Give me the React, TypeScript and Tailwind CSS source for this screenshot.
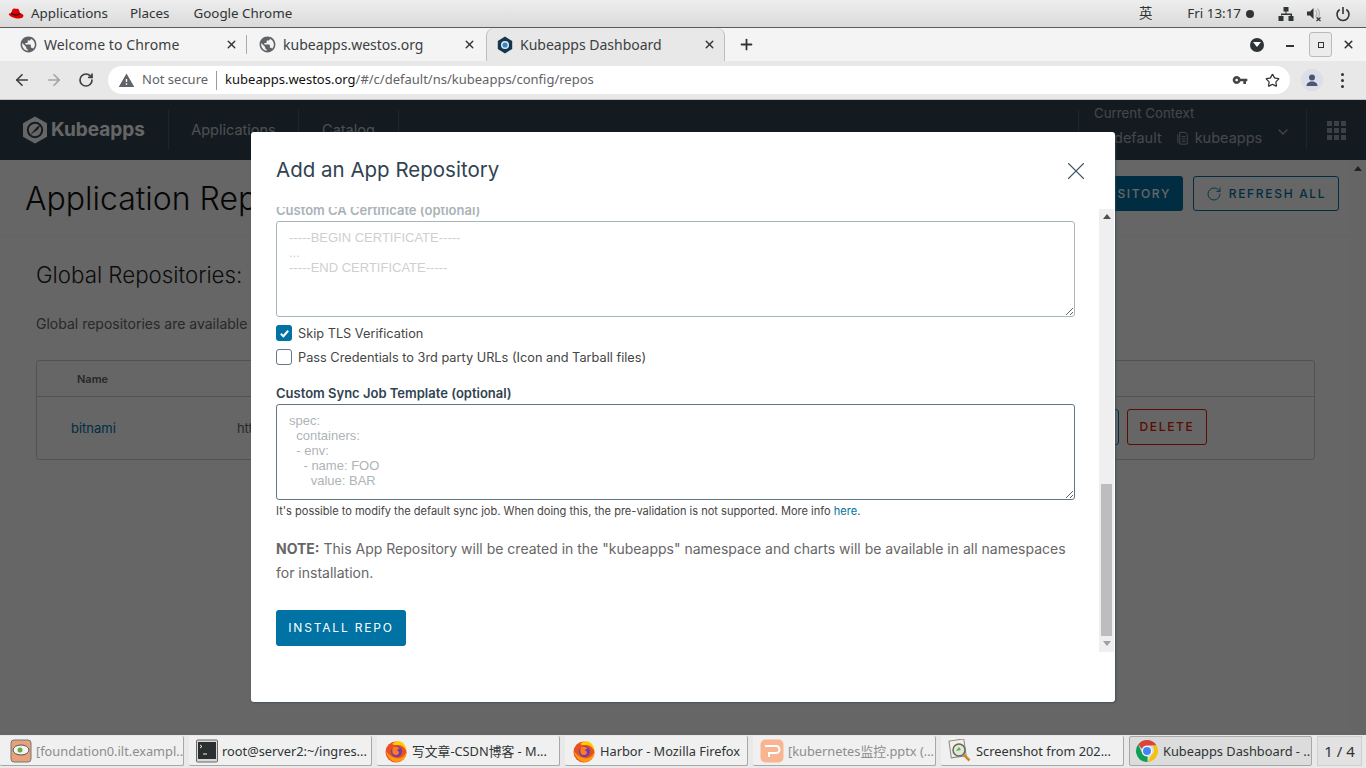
import { ArrowLeft, ArrowRight, ChevronDown, Plus, RotateCw, Star, X } from 'lucide-react';

const sys = 'font-["Noto_Sans","Noto_Sans_CJK_SC",sans-serif]';

const GLOBE =
  'M12 2C6.48 2 2 6.48 2 12s4.48 10 10 10 10-4.48 10-10S17.52 2 12 2zm-1 17.93c-3.95-.49-7-3.85-7-7.93 0-.62.08-1.21.21-1.79L9 15v1c0 1.1.9 2 2 2v1.93zm6.9-2.54c-.26-.81-1-1.39-1.9-1.39h-1v-3c0-.55-.45-1-1-1H8v-2h2c.55 0 1-.45 1-1V7h2c1.1 0 2-.9 2-2v-.41c2.93 1.19 5 4.06 5 7.41 0 2.08-.8 3.97-2.1 5.39z';

const Globe = () => (
  <svg viewBox="0 0 24 24" className="h-[19px] w-[19px] shrink-0" fill="#5f6368">
    <path d={GLOBE} />
  </svg>
);

const KubeMark = ({ className, color }: { className: string; color: string }) => (
  <svg viewBox="0 0 26 28" className={className} fill="none">
    <path d="M13 0.5 25 7.2v13.6L13 27.5 1 20.8V7.2z" fill={color} />
    <circle cx="13" cy="14" r="7.2" stroke="#314351" strokeWidth="2" />
    <path d="M8 19 14.500 11.500 19 8l-3 5.500z" fill="#314351" />
  </svg>
);

const Firefox = () => (
  <svg viewBox="0 0 24 24" className="h-[24px] w-[24px] shrink-0">
    <circle cx="12" cy="13" r="10.5" fill="#e8501f" />
    <path d="M2 12C3 18 7 23 13 23c6 0 10-5 9.5-10.5C21 17 17 20 12 19 7 18 4 15 2 12z" fill="#ff980e" />
    <path d="M8 5c3-3 8-4 11-1 2 2 3.500 5 3.500 8-2-4-5-6-8-6-2 0-4 .5-6.500-1z" fill="#ffcb00" />
    <circle cx="12.500" cy="12.500" r="5.500" fill="#6d3bb5" />
    <path d="M9 8c3-1.500 6 0 6.500 2-1.500 0-2.500.5-2.500 1.500 2 .5 2.500 2 1.500 3.500-1 1.500-4 1.500-5.500 0C8 13.500 8 10 9 8z" fill="#ff7a1a" />
  </svg>
);

const ChromeLogo = () => (
  <svg viewBox="0 0 24 24" className="h-[24px] w-[24px] shrink-0">
    <path d="M12 1a11 11 0 0 1 9.530 5.500H12a5.500 5.500 0 0 0-5.100 3.400L3.300 5.300A11 11 0 0 1 12 1z" fill="#db4437" />
    <path d="M21.530 6.500A11 11 0 0 1 12.500 23l4.300-7.500a5.500 5.500 0 0 0 0-9z" fill="#f4c20d" />
    <path d="M3.300 5.300 7.600 15.300a5.500 5.500 0 0 0 5 2.200L12.500 23A11 11 0 0 1 3.300 5.300z" fill="#0f9d58" />
    <circle cx="12" cy="12" r="5" fill="#fff" />
    <circle cx="12" cy="12" r="4" fill="#4285f4" />
  </svg>
);

const taskItems = [
  {
    title: '[foundation0.ilt.exampl...',
    faded: true,
    icon: (
      <svg viewBox="0 0 22 24" className="h-[24px] w-[22px] shrink-0">
        <rect x="1" y="1" width="20" height="22" rx="3" fill="#e8a27a" stroke="#777" />
        <ellipse cx="11" cy="11" rx="8" ry="5" fill="#f4f4f0" stroke="#555" />
        <circle cx="10" cy="11" r="2.500" fill="#6aa84f" />
      </svg>
    ),
  },
  {
    title: 'root@server2:~/ingres...',
    icon: (
      <svg viewBox="0 0 22 24" className="h-[24px] w-[22px] shrink-0">
        <rect x="0.500" y="1" width="21" height="22" rx="1" fill="#d8d8d8" stroke="#666" />
        <rect x="2" y="3" width="18" height="17" fill="#2b2f30" />
        <path d="M4 6l2 1.500L4 9M7 15h4" stroke="#eee" fill="none" />
      </svg>
    ),
  },
  { title: '写文章-CSDN博客 - M...', icon: <Firefox /> },
  { title: 'Harbor - Mozilla Firefox', icon: <Firefox /> },
  {
    title: '[kubernetes监控.pptx (...',
    faded: true,
    icon: (
      <svg viewBox="0 0 24 24" className="h-[24px] w-[24px] shrink-0">
        <rect x="0.500" y="0.500" width="23" height="23" rx="5" fill="#f9b592" />
        <path d="M5 7h11a3.500 3.500 0 0 1 0 7H9v4" stroke="#fff" strokeWidth="2" fill="none" />
      </svg>
    ),
  },
  {
    title: 'Screenshot from 202...',
    icon: (
      <svg viewBox="0 0 24 24" className="h-[24px] w-[24px] shrink-0">
        <rect x="2" y="1" width="15" height="17" fill="#f2f0e4" stroke="#888" transform="rotate(-8 9 9)" />
        <circle cx="11" cy="11" r="6" fill="#dfe9d8" stroke="#666" strokeWidth="1.500" />
        <path d="M8 12l3-4 2 3z" fill="#6aa84f" />
        <path d="M15.500 15.500l6 6" stroke="#c98a2b" strokeWidth="2.500" />
      </svg>
    ),
  },
  { title: 'Kubeapps Dashboard - ...', icon: <ChromeLogo />, active: true },
];

const TopBar = () => (
  <div
    className={`flex h-[28px] shrink-0 items-center border-b border-[#5c5c5c] bg-gradient-to-b from-[#eeeeee] to-[#dadada] text-[13.400px] text-[#2e3436] ${sys}`}
  >
    <svg viewBox="0 0 16 12" className="ml-[8px] h-[12px] w-[16px]">
      <path d="M4.500 1.500C5.500.2 7 .6 8 1c1-.5 2.500-.5 3 1l1 3c2 .6 3.500 1.500 3.500 2.800 0 1.400-1.800 2.700-4.800 2.700C6.500 10.500 2 8.500.8 6.500c0-1 .9-1.400 2.200-1.300z" fill="#e00000" />
      <path d="M3 5.200c2.500 1.600 6.500 2.500 9 .3" stroke="#111" strokeWidth="1.100" fill="none" />
    </svg>
    <span className="ml-[7px]">Applications</span>
    <span className="ml-[22px]">Places</span>
    <span className="ml-[24px]">Google Chrome</span>
    <span className="ml-auto">英</span>
    <span className="ml-[35px]">Fri 13:17</span>
    <span className="ml-[5px] h-[8px] w-[8px] rounded-full bg-[#2e3436]" />
    <svg viewBox="0 0 16 16" className="ml-[24px] h-[16px] w-[16px]" fill="#2e3436">
      <path d="M5.500 1h5v4.500h-2V7.500H14V10h1.500v5h-5v-5h2V9h-9v1h2v5h-5v-5H3V7.500h4.500v-2h-2z" />
    </svg>
    <svg viewBox="0 0 16 16" className="ml-[12px] h-[16px] w-[16px]" fill="#2e3436">
      <path d="M1 5.500h3L7.500 2v11L4 9.500H1z" />
      <path d="M9.500 4c1.500 2 1.500 5 0 7M11.500 2.500c2.300 3 2.300 7 0 10" stroke="#b0b0b0" fill="none" strokeWidth="1.200" />
      <path d="M10.500 11.500l4 3.500m0-3.500l-4 3.500" stroke="#2e3436" strokeWidth="1.300" />
    </svg>
    <svg viewBox="0 0 16 16" className="ml-[13px] mr-[15px] h-[16px] w-[16px]" fill="none" stroke="#2e3436" strokeWidth="1.600">
      <path d="M8 1v7M4.700 3.500a6 6 0 1 0 6.600 0" />
    </svg>
  </div>
);

const TabStrip = () => (
  <div className={`flex h-[33px] shrink-0 items-stretch bg-[#f4f4f4] text-[14px] text-[#3c4043] ${sys}`}>
    <div className="flex w-[246px] items-center pl-[19px] pr-[8px]">
      <Globe />
      <span className="ml-[6px] tracking-[0.1px]">Welcome to Chrome</span>
      <X className="ml-auto h-[13px] w-[13px] text-[#333]" strokeWidth={2.500} />
    </div>
    <div className="my-[7px] w-px bg-[#aaaaaa]" />
    <div className="flex w-[239px] items-center pl-[11px] pr-[10px]">
      <Globe />
      <span className="ml-[6px]">kubeapps.westos.org</span>
      <X className="ml-auto h-[13px] w-[13px] text-[#333]" strokeWidth={2.500} />
    </div>
    <div className="flex w-[239px] items-center rounded-t-[8px] border-x border-[#bdbdbd] bg-[#e8e8e8] pl-[10px] pr-[8px]">
      <svg viewBox="0 0 20 22" className="h-[18px] w-[16px] shrink-0">
        <path d="M10 0.500 19 6v10l-9 5.500L1 16V6z" fill="#15364f" />
        <circle cx="10" cy="11" r="5" fill="#e8e8e8" />
        <circle cx="10" cy="11" r="3.200" fill="#2d8ac9" />
      </svg>
      <span className="ml-[7px]">Kubeapps Dashboard</span>
      <X className="ml-auto h-[13px] w-[13px] text-[#333]" strokeWidth={2.500} />
    </div>
    <Plus className="ml-[13px] h-[17px] w-[17px] self-center text-[#333]" strokeWidth={2.500} />
    <div className="ml-auto flex items-center">
      <span className="flex h-[14px] w-[14px] items-center justify-center rounded-full bg-[#2e3436]">
        <span className="h-0 w-0 border-x-[4px] border-t-[5px] border-x-transparent border-t-white" />
      </span>
      <span className="ml-[22px] mt-[3px] h-[2px] w-[8px] bg-[#2e3436]" />
      <span className="ml-[15px] flex h-[25px] w-[23px] items-center justify-center rounded-[3px] border border-[#bbbbbb] bg-[#ececec]">
        <span className="h-[6px] w-[6px] border-[1.500px] border-[#2e3436]" />
      </span>
      <X className="ml-[10px] mr-[11px] h-[13px] w-[13px] text-[#2e3436]" strokeWidth={3} />
    </div>
  </div>
);

const Toolbar = () => (
  <div className={`flex h-[39px] shrink-0 items-center border-b border-[#c4c4c4] bg-[#e8e8e8] ${sys}`}>
    <ArrowLeft className="ml-[13px] h-[18px] w-[18px] text-[#3c4043]" strokeWidth={2.200} />
    <ArrowRight className="ml-[14px] h-[18px] w-[18px] text-[#a0a2a4]" strokeWidth={2.200} />
    <RotateCw className="ml-[15px] h-[16px] w-[16px] text-[#3c4043]" strokeWidth={2.500} />
    <div className="ml-[14px] flex h-[28px] w-[1182px] items-center rounded-full bg-white pl-[10px] pr-[10px] text-[13px]">
      <svg viewBox="0 0 24 24" className="h-[17px] w-[17px]" fill="#5f6368">
        <path d="M1 21h22L12 2 1 21zm12-3h-2v-2h2v2zm0-4h-2v-4h2v4z" />
      </svg>
      <span className="ml-[7px] text-[#5f6368]">Not secure</span>
      <span className="ml-[8px] h-[19px] w-px bg-[#9a9a9a]" />
      <span className="ml-[8px] text-[#111]">kubeapps.westos.org</span>
      <span className="text-[#5f6368]">/#/c/default/ns/kubeapps/config/repos</span>
      <svg viewBox="0 0 24 24" className="ml-auto h-[16px] w-[16px]" fill="#444">
        <path d="M12.650 10C11.830 7.670 9.610 6 7 6c-3.310 0-6 2.690-6 6s2.690 6 6 6c2.610 0 4.830-1.670 5.650-4H17v4h4v-4h2v-4H12.650zM7 14c-1.100 0-2-.9-2-2s.9-2 2-2 2 .9 2 2-.9 2-2 2z" />
      </svg>
      <Star className="ml-[17px] h-[15px] w-[15px] text-[#333]" strokeWidth={2} />
    </div>
    <span className="ml-[11px] flex h-[22px] w-[22px] items-center justify-center rounded-full bg-[#dcdee8]">
      <svg viewBox="0 0 16 16" className="h-[16px] w-[16px]" fill="#4a5578">
        <circle cx="8" cy="5.500" r="3" />
        <path d="M2.500 14c0-3 2.500-4.500 5.500-4.500s5.500 1.500 5.500 4.500z" />
      </svg>
    </span>
    <span className="ml-[18px] flex flex-col gap-[3px]">
      <span className="h-[3px] w-[3px] rounded-full bg-[#333]" />
      <span className="h-[3px] w-[3px] rounded-full bg-[#333]" />
      <span className="h-[3px] w-[3px] rounded-full bg-[#333]" />
    </span>
  </div>
);

const KubeappsHeader = () => (
  <div className="flex h-[60px] shrink-0 items-center bg-[#314351] text-white">
    <KubeMark className="ml-[22px] h-[28px] w-[26px]" color="#ffffff" />
    <span className="ml-[3px] text-[19px] font-bold">Kubeapps</span>
    <div className="ml-[23px] flex h-[40px] border-l border-white/15">
      <span className="flex w-[130px] items-center justify-center border-r border-white/15 text-[14.500px] text-white/70">
        Applications
      </span>
      <span className="flex w-[100px] items-center justify-center border-r border-white/15 text-[14.500px] text-white/70">
        Catalog
      </span>
    </div>
    <div className="ml-auto flex h-[40px] w-[228px] flex-col border-l border-white/15 pl-[15px] text-white/60">
      <span className="-mt-[5px] text-[13.300px] leading-[16px]">Current Context</span>
      <span className="mt-[9px] flex items-center text-[14.500px] leading-[16px]">
        <span className="ml-[20px]">default</span>
        <svg viewBox="0 0 14 16" className="ml-[14px] h-[15px] w-[14px]" fill="none" stroke="currentColor">
          <path d="M3.500 1.500h6l2 2V14h-8z" />
          <path d="M5.500 6h4M5.500 8.500h4M5.500 11h4M1.500 3.500V13" />
        </svg>
        <span className="ml-[5px]">kubeapps</span>
        <ChevronDown className="ml-[13px] -mt-[12px] h-[16px] w-[16px]" strokeWidth={1.800} />
      </span>
    </div>
    <div className="flex h-[40px] w-[60px] items-center justify-center border-l border-white/15">
      <div className="grid grid-cols-3 gap-[2px]">
        {Array.from({ length: 9 }).map((_, i) => (
          <span key={i} className="h-[5px] w-[5px] bg-white/50" />
        ))}
      </div>
    </div>
  </div>
);

const RepoPage = () => (
  <div className="flex min-h-0 flex-1 bg-[#ffffff]">
    <div className="flex min-w-0 flex-1 flex-col">
      <div className="flex h-[77px] shrink-0 items-start border-b border-[#f8f8f8] pl-[25px] pr-[11px] pt-[16px]">
        <h1 className="mt-[1px] text-[32px] font-light leading-[44px] text-[#111]">Application Repositories</h1>
        <button className="ml-auto flex h-[35px] items-center rounded-[3px] bg-[#0072a3] px-[12px] text-[12px] font-medium tracking-[0.14em] text-white">
          ADD APP REPOSITORY
        </button>
        <button className="ml-[10px] flex h-[35px] w-[146px] items-center justify-center rounded-[3px] border border-[#0072a3] text-[12px] font-medium tracking-[0.14em] text-[#0072a3]">
          <RotateCw className="mr-[7px] h-[16px] w-[16px]" strokeWidth={1.300} />
          REFRESH ALL
        </button>
      </div>
      <div className="pl-[36px] pr-[35px]">
        <h2 className="mt-[22px] text-[22.300px] font-light leading-[32px] text-[#222]">Global Repositories:</h2>
        <p className="mt-[23px] text-[14px] leading-[20px] text-[#666]">
          Global repositories are available for all Kubeapps users.
        </p>
        <div className="mt-[26px] h-[100px] rounded-[3px] border border-[#cccccc]">
          <div className="flex h-[36px] items-center border-b border-[#cccccc] pl-[40px] pt-[1px] text-[11px] font-semibold text-[#666]">
            Name
          </div>
          <div className="flex h-[62px] items-center pl-[34px] pr-[107px] text-[13px]">
            <span className="mt-[1px] text-[#0072a3]">bitnami</span>
            <span className="ml-[121px] mt-[1px] text-[#666]">https://charts.bitnami.com/bitnami</span>
            <button className="ml-auto -mt-[2px] h-[36px] w-[90px] rounded-[3px] border border-[#0072a3] text-[12px] font-medium tracking-[0.14em] text-[#0072a3]">
              REFRESH
            </button>
            <button className="ml-[8px] -mt-[2px] h-[36px] w-[80px] rounded-[3px] border border-[#e12200] text-[12px] font-medium tracking-[0.14em] text-[#e12200]">
              DELETE
            </button>
          </div>
        </div>
      </div>
    </div>
    <div className="flex w-[16px] shrink-0 justify-center bg-[#fdfdfd] pt-[6px]">
      <span className="h-0 w-0 border-x-[4px] border-b-[5px] border-x-transparent border-b-[#555]" />
    </div>
  </div>
);

const Modal = () => (
  <div className="absolute left-[251px] top-[32px] flex h-[570px] w-[864px] flex-col rounded-[3px] bg-white shadow-[1px_1px_2px_rgba(50,70,85,0.7)]">
    <div className="flex h-[75px] shrink-0 items-center pl-[25px] pr-[24px]">
      <h3 className="mt-[1px] text-[20.500px] text-[#314351]">Add an App Repository</h3>
      <X className="ml-auto mt-[2px] h-[30px] w-[30px] text-[#3f5666]" strokeWidth={0.850} />
    </div>
    <div className="flex h-[445px] min-h-0">
      <div className="min-w-0 flex-1 overflow-hidden pl-[25px] pr-[24px]">
        <label className="-mt-[4px] block h-[14px] text-[13px] font-semibold leading-[14px] text-[#aab2b7]">
          Custom CA Certificate (optional)
        </label>
        <textarea
          readOnly
          className="mt-[4px] block h-[96px] w-full rounded-[3px] border border-[#a9b6be] px-[12px] pt-[8px] font-['Liberation_Sans',sans-serif] text-[13px] leading-[15px] placeholder:text-[#cfcfcf]"
          placeholder={'-----BEGIN CERTIFICATE-----\n...\n-----END CERTIFICATE-----'}
        />
        <label className="mt-[8px] flex h-[16px] items-center text-[12.750px] text-[#454545]">
          <span className="flex h-[16px] w-[16px] items-center justify-center rounded-[3px] bg-[#0072a3]">
            <svg viewBox="0 0 12 12" className="h-[11px] w-[11px]" fill="none" stroke="#fff" strokeWidth="2.200">
              <path d="M2 6.300 4.800 9 10 3" />
            </svg>
          </span>
          <span className="ml-[6px] mt-[2px]">Skip TLS Verification</span>
        </label>
        <label className="mt-[8px] flex h-[16px] items-center text-[12.750px] text-[#454545]">
          <span className="h-[16px] w-[16px] rounded-[3px] border border-[#66798a]" />
          <span className="ml-[6px] mt-[2px]">Pass Credentials to 3rd party URLs (Icon and Tarball files)</span>
        </label>
        <label className="mt-[21px] block h-[14px] text-[13px] font-semibold leading-[14px] text-[#314351]">
          Custom Sync Job Template (optional)
        </label>
        <textarea
          readOnly
          className="mt-[4px] block h-[96px] w-full rounded-[3px] border border-[#5f7785] px-[12px] pt-[8px] font-['Liberation_Sans',sans-serif] text-[13px] leading-[15px] placeholder:text-[#aeb4b8]"
          placeholder={'spec:\n  containers:\n  - env:\n    - name: FOO\n      value: BAR'}
        />
        <p className="mt-[4px] h-[14px] text-[11.050px] leading-[14px] text-[#454545]">
          It&apos;s possible to modify the default sync job. When doing this, the pre-validation is not supported. More
          info <span className="text-[#0072a3]">here</span>.
        </p>
        <p className="mt-[19px] text-[14px] leading-[24px] text-[#666666]">
          <b className="font-bold">NOTE:</b> This App Repository will be created in the &quot;kubeapps&quot; namespace
          and charts will be available in all namespaces for installation.
        </p>
        <button className="mt-[25px] h-[36px] w-[130px] rounded-[3px] bg-[#0072a3] text-[12px] font-normal tracking-[0.15em] text-white">
          INSTALL REPO
        </button>
      </div>
      <div className="mt-[2px] mr-[1px] flex h-[443px] w-[15px] shrink-0 flex-col items-center bg-[#efefef]">
        <span className="mt-[5px] h-0 w-0 border-x-[4px] border-b-[5px] border-x-transparent border-b-[#505050]" />
        <span className="mt-[265px] h-[152px] w-[11px] bg-[#bdbdbd]" />
        <span className="mt-[5px] h-0 w-0 border-x-[4px] border-t-[5px] border-x-transparent border-t-[#a0a0a0]" />
      </div>
    </div>
  </div>
);

const Taskbar = () => (
  <div className={`flex h-[33px] shrink-0 items-start gap-[5px] bg-[#e9e9e9] pt-[1px] text-[12.800px] text-[#2e3436] ${sys}`}>
    {taskItems.map((t) => (
      <div
        key={t.title}
        className={`flex h-[30px] w-[183px] items-center overflow-hidden rounded-[2px] border-b border-r border-[#a8a8a8] first:w-[184px] first:pl-[10px] ${
          t.active ? 'border-l border-t border-[#777777] bg-[#dcdcdc] pl-[5px]' : 'bg-[#f0f0f0] pl-[7px]'
        }`}
      >
        {t.icon}
        <span className={`ml-[4px] mt-[2px] whitespace-nowrap ${t.faded ? 'text-[#8d8d8d]' : ''}`}>{t.title}</span>
      </div>
    ))}
    <div className="flex h-[30px] w-[45px] items-center justify-center border border-[#cfcfcf] bg-[#e2e2e2] text-[15px]">
      1 / 4
    </div>
  </div>
);

export default function App() {
  return (
    <div className="flex h-[768px] w-[1366px] flex-col overflow-hidden font-['Inter',sans-serif]">
      <TopBar />
      <TabStrip />
      <Toolbar />
      <div className="relative flex min-h-0 flex-1 flex-col">
        <KubeappsHeader />
        <RepoPage />
        <div className="absolute inset-0 bg-black/60" />
        <Modal />
      </div>
      <Taskbar />
    </div>
  );
}
